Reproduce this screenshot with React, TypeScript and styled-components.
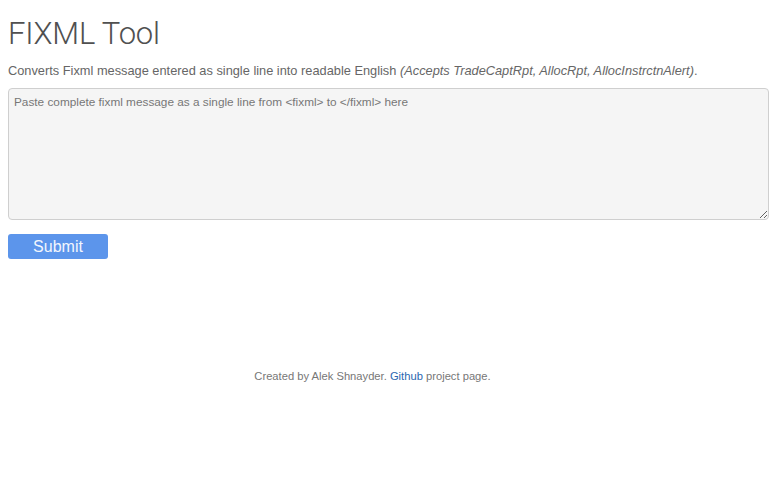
import React from "react";
import styled, { createGlobalStyle } from "styled-components";

const Global = createGlobalStyle`
  html, body { margin: 0; padding: 0; background: #ffffff; }
  body { font-family: "Liberation Sans", Arial, sans-serif; color: #555; }
  * { box-sizing: border-box; }
`;

const Page = styled.div`
  padding: 0 5px 0 8px;
  display: flex;
  flex-direction: column;
`;

const Title = styled.h1`
  margin: 16px 0 0 0;
  font-family: Roboto, "Liberation Sans", sans-serif;
  font-weight: 300;
  font-size: 31px;
  line-height: 36px;
  letter-spacing: -0.2px;
  color: #505050;
`;

const Lead = styled.p`
  margin: 11px 0 0 0;
  font-size: 12.8px;
  line-height: 16px;
  color: #666;
`;

const Note = styled.em`
  font-style: italic;
`;

const Message = styled.textarea`
  margin-top: 9px;
  width: 100%;
  height: 132px;
  background: #f5f5f5;
  border: 1px solid #cfcfcf;
  border-radius: 4px;
  padding: 5px 5px;
  font-family: "Liberation Sans", Arial, sans-serif;
  font-size: 11.8px;
  line-height: 16px;
  color: #555;
  resize: vertical;
  display: block;
  &::placeholder { color: #777; }
`;

const Submit = styled.button`
  margin-top: 14px;
  width: 100px;
  height: 25px;
  align-self: flex-start;
  background: #5c95eb;
  border: none;
  border-radius: 3px;
  color: #f2f6fd;
  font-family: "Liberation Sans", Arial, sans-serif;
  font-size: 16px;
  line-height: 25px;
  padding: 0;
`;

const Footer = styled.footer`
  margin-top: 110px;
  padding-right: 32px;
  text-align: center;
  font-size: 11.2px;
  line-height: 14px;
  color: #777;
`;

const Link = styled.a`
  color: #2b67b0;
  text-decoration: none;
`;

export default function App() {
  return (
    <>
      <Global />
      <Page>
        <Title>FIXML Tool</Title>
        <Lead>
          Converts Fixml message entered as single line into readable English{" "}
          <Note>(Accepts TradeCaptRpt, AllocRpt, AllocInstrctnAlert)</Note>.
        </Lead>
        <Message placeholder="Paste complete fixml message as a single line from <fixml> to </fixml> here" />
        <Submit>Submit</Submit>
        <Footer>
          Created by Alek Shnayder. <Link href="#">Github</Link> project page.
        </Footer>
      </Page>
    </>
  );
}
